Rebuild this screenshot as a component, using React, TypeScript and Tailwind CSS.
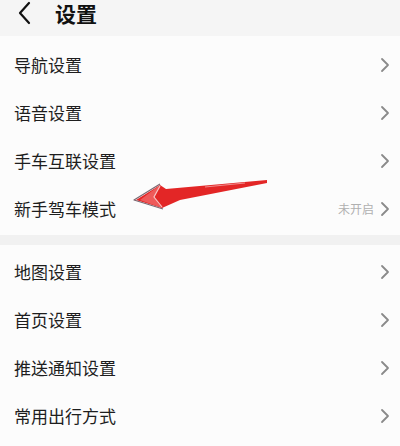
import React from "react";

const Chevron = () => (
  <svg width="10" height="16" viewBox="0 0 10 16" className="shrink-0">
    <path d="M2 2 L8 8 L2 14" fill="none" stroke="#8a8a8a" strokeWidth="1.8" strokeLinecap="round" strokeLinejoin="round" />
  </svg>
);

const Row = ({ label, value }: { label: string; value?: string }) => (
  <div className="flex h-[48px] items-center justify-between pl-[14px] pr-[10px]">
    <span className="text-[17px] text-[#1e1e1e]">{label}</span>
    <div className="flex items-center gap-[6px]">
      {value && <span className="text-[12px] text-[#b0b0b0]">{value}</span>}
      <Chevron />
    </div>
  </div>
);

export default function App() {
  return (
    <div
      className="relative h-[446px] w-[400px] overflow-hidden bg-[#fcfcfc]"
      style={{ fontFamily: '"Noto Sans CJK SC", "Noto Sans", sans-serif' }}
    >
      <div className="flex h-[36px] items-start bg-[#f5f5f5] pl-[17px] pt-[1px]">
        <svg width="16" height="24" viewBox="0 0 16 24">
          <path d="M12 2 L3 12 L12 22" fill="none" stroke="#111" strokeWidth="2.2" strokeLinecap="round" strokeLinejoin="round" />
        </svg>
        <span className="ml-[22px] text-[21px] font-bold leading-[25px] text-[#111]">设置</span>
      </div>
      <div className="pt-[5px]">
        <Row label="导航设置" />
        <Row label="语音设置" />
        <Row label="手车互联设置" />
        <Row label="新手驾车模式" value="未开启" />
      </div>
      <div className="mt-[2px] h-[10px] bg-[#f1f1f1]" />
      <div className="pt-[3px]">
        <Row label="地图设置" />
        <Row label="首页设置" />
        <Row label="推送通知设置" />
        <Row label="常用出行方式" />
      </div>
      <svg className="absolute left-0 top-0" width="400" height="446" viewBox="0 0 400 446">
        <path
          d="M136 200 L160 185 L166 189 L267 180 L267 183 L180 200 L162 208 Z"
          fill="#e32626"
        />
        <path d="M160 185 L154 197 L162 208 L140 200 Z" fill="#ee5a5a" />
        <path d="M160 184 L134 200 L163 209" fill="none" stroke="#7a6670" strokeWidth="1.2" strokeLinejoin="round" />
        <path d="M160 186 L154 197 L162 207" fill="none" stroke="#f7c4c4" strokeWidth="1.2" />
        <path d="M205 187 L245 183" fill="none" stroke="#f28c8c" strokeWidth="1" />
      </svg>
    </div>
  );
}
